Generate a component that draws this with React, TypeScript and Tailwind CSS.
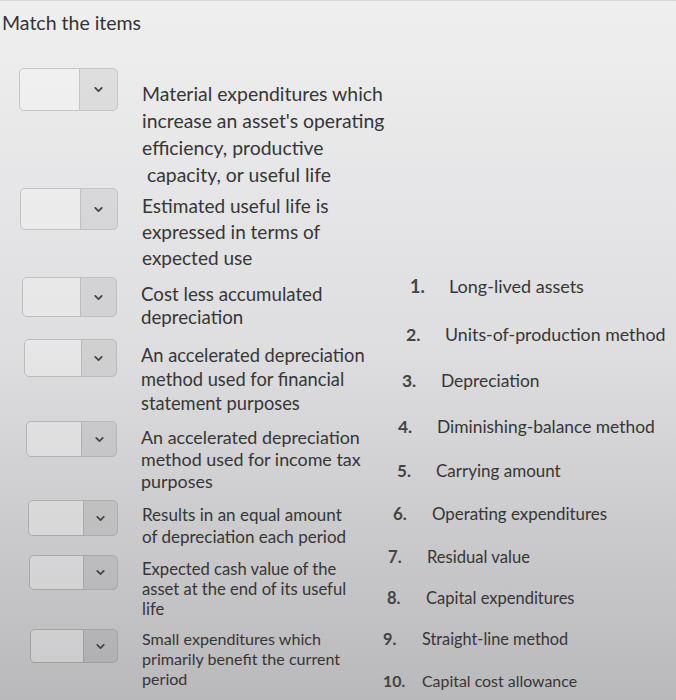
import React from 'react';
import { ChevronDown } from 'lucide-react';

interface Prompt {
  lines: string[];
  box: string;
  text: string;
}

// left column: each row is a select box followed by the statement
const prompts: Prompt[] = [
  {
    lines: ['Material expenditures which', "increase an asset's operating", 'efficiency, productive', ' capacity, or useful life'],
    box: 'ml-[19px] w-[99px] h-[43px]',
    text: 'mt-[12px] text-[19.4px] leading-[27px]',
  },
  {
    lines: ['Estimated useful life is', 'expressed in terms of', 'expected use'],
    box: 'ml-[20px] w-[98px] h-[42px]',
    text: 'mt-[5px] text-[19px] leading-[26px]',
  },
  {
    lines: ['Cost less accumulated', 'depreciation'],
    box: 'ml-[22px] w-[95px] h-[40px] mt-[6px]',
    text: 'mt-[12px] text-[18.7px] leading-[23px]',
  },
  {
    lines: ['An accelerated depreciation', 'method used for financial', 'statement purposes'],
    box: 'ml-[24px] w-[93px] h-[38px] mt-[10px]',
    text: 'mt-[14px] text-[18.3px] leading-[24px]',
  },
  {
    lines: ['An accelerated depreciation', 'method used for income tax', 'purposes'],
    box: 'ml-[26px] w-[91px] h-[36px] mt-[6px]',
    text: 'mt-[11px] text-[17.9px] leading-[22px]',
  },
  {
    lines: ['Results in an equal amount', 'of depreciation each period'],
    box: 'ml-[28px] w-[90px] h-[36px] mt-[8px]',
    text: 'mt-[12px] text-[17px] leading-[22px]',
  },
  {
    lines: ['Expected cash value of the', 'asset at the end of its useful', 'life'],
    box: 'ml-[29px] w-[89px] h-[35px] mt-[7px]',
    text: 'mt-[11px] text-[16.6px] leading-[20px]',
  },
  {
    lines: ['Small expenditures which', 'primarily benefit the current', 'period'],
    box: 'ml-[30px] w-[88px] h-[34px] mt-[10px]',
    text: 'mt-[10px] text-[16.1px] leading-[20px]',
  },
];

// right column: numbered answers
const answers: { label: string; row: string }[] = [
  { label: 'Long-lived assets', row: 'pl-[27px] h-[50px] text-[18px]' },
  { label: 'Units-of-production method', row: 'pl-[23px] h-[46px] text-[17.8px]' },
  { label: 'Depreciation', row: 'pl-[19px] h-[48px] text-[17.4px]' },
  { label: 'Diminishing-balance method', row: 'pl-[15px] h-[44px] text-[17.4px]' },
  { label: 'Carrying amount', row: 'pl-[14px] h-[43px] text-[17px]' },
  { label: 'Operating expenditures', row: 'pl-[10px] h-[44px] text-[16.9px]' },
  { label: 'Residual value', row: 'pl-[5px] h-[42px] text-[16.6px]' },
  { label: 'Capital expenditures', row: 'pl-[4px] h-[41px] text-[16.5px]' },
  { label: 'Straight-line method', row: 'pl-0 h-[41px] text-[16.3px]' },
  { label: 'Capital cost allowance', row: 'pl-0 h-[41px] text-[15.9px]' },
];

const SelectBox: React.FC<{ className: string }> = ({ className }) => (
  <div
    className={`${className} shrink-0 flex rounded-[5px] border border-black/15 overflow-hidden`}
  >
    <div className="flex-1 bg-white/25" />
    <div className="w-[39%] flex items-center justify-center bg-black/[0.06] border-l border-black/10">
      <ChevronDown size={13} strokeWidth={3.2} className="text-[#444]" />
    </div>
  </div>
);

export default function App() {
  return (
    <div
      className="w-[676px] h-[700px] overflow-hidden bg-linear-to-b from-[#f0eff0] via-[#dedddf] to-[#b9b8ba] text-[#363636]"
      style={{ fontFamily: 'Lato, "Open Sans", sans-serif' }}
    >
      <div className="border-t border-[#d6d6d6]" />
      <h1 className="pl-[2px] pt-[10px] text-[19.5px] leading-[24px] text-[#333]">Match the items</h1>

      <div className="flex">
        <div className="w-[383px] pt-[33px] flex flex-col">
          {prompts.map((p, i) => (
            <div key={i} className="flex items-start">
              <SelectBox className={p.box} />
              <div className={`${p.text} ml-[24px] whitespace-pre`}>
                {p.lines.map((l, j) => (
                  <div key={j}>{l}</div>
                ))}
              </div>
            </div>
          ))}
        </div>

        <div className="flex-1 pt-[226px] flex flex-col">
          {answers.map((a, i) => (
            <div key={i} className={`${a.row} flex items-center whitespace-nowrap`}>
              <span className="w-[39px] font-bold text-[#444]">{i + 1}.</span>
              <span>{a.label}</span>
            </div>
          ))}
        </div>
      </div>
    </div>
  );
}
